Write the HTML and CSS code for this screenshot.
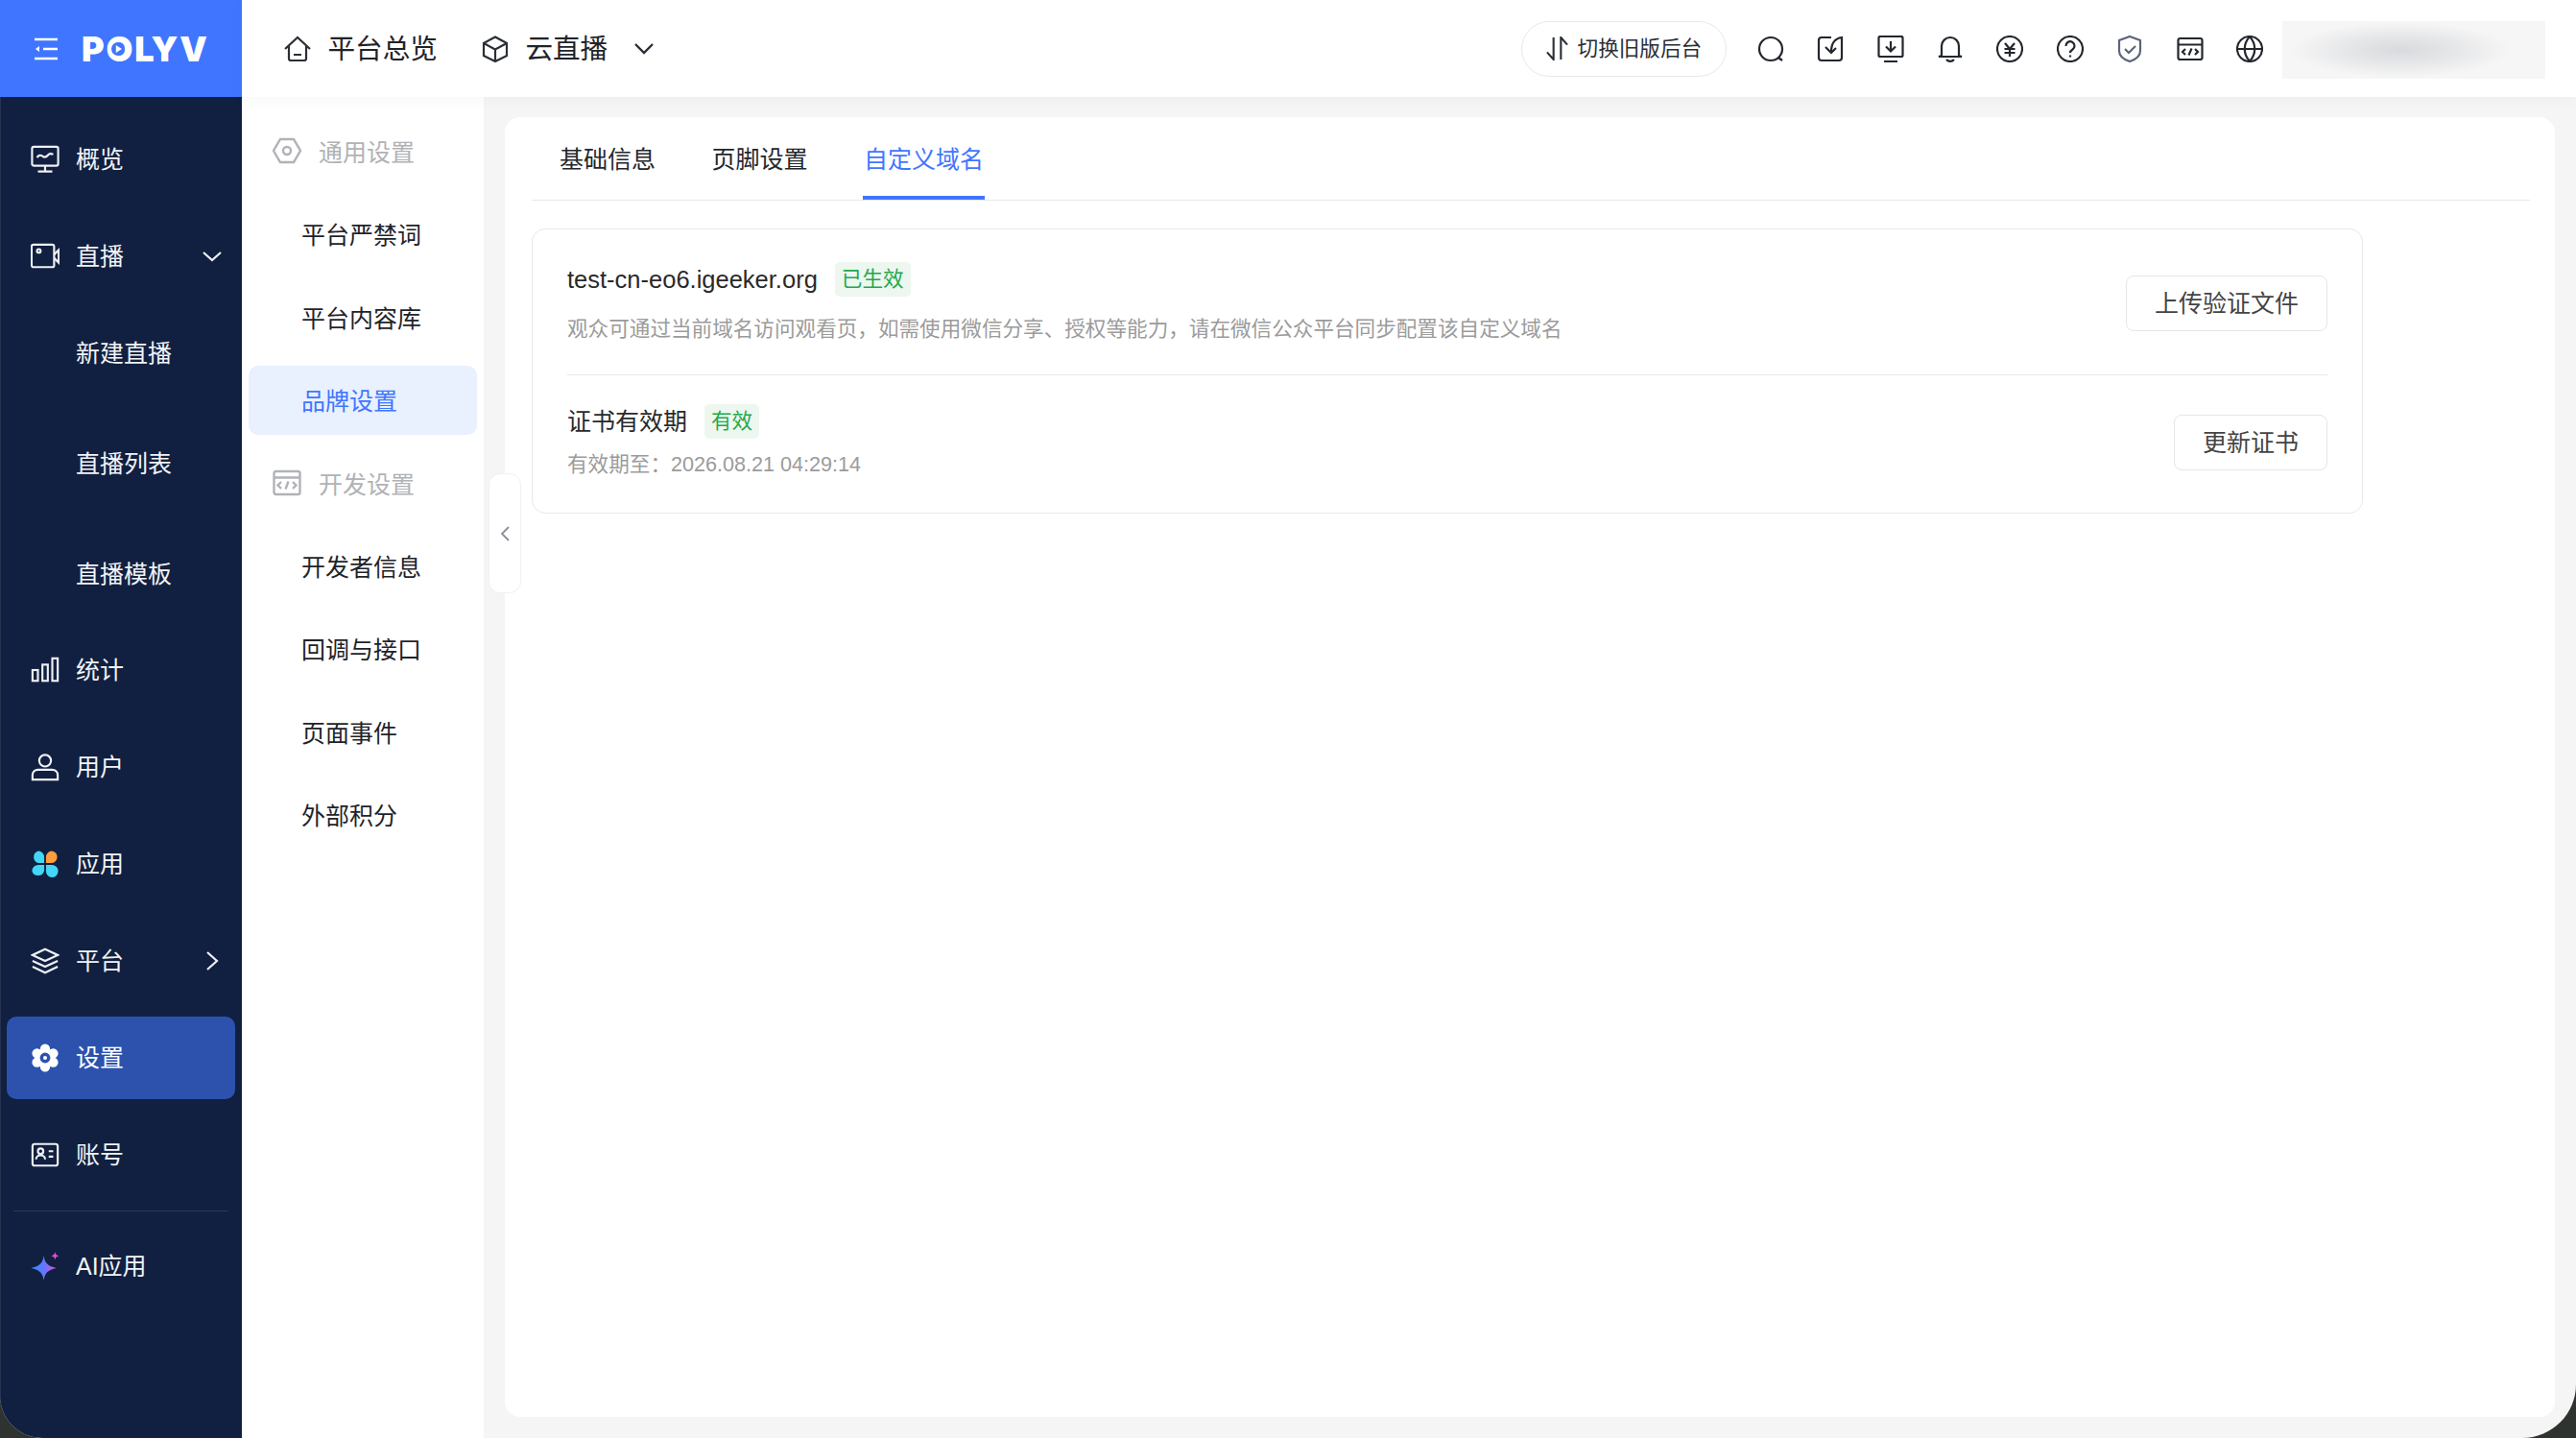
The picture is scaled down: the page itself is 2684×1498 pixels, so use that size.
FILE: index.html
```html
<!DOCTYPE html>
<html lang="zh-CN">
<head>
<meta charset="utf-8">
<title>品牌设置</title>
<link rel="stylesheet" href="styles.css">
</head>
<body>
<div class="app">
  <aside class="side">
    <div class="brand">
      <svg class="brand-menu" viewBox="0 0 26 24"><path d="M1 2h24M10 12h15M1 22h24"/><path class="fillw" d="M2 12l4-3v6z"/></svg>
      <span class="logo">POLYV<svg class="logo-play" viewBox="0 0 16 16"><circle cx="8" cy="8" r="8"/><path d="M5.500 3.500l7 4.500-7 4.500z"/></svg></span>
    </div>
    <nav class="menu">
      <a class="mrow"><svg class="ico" viewBox="0 0 32 32"><rect x="1.500" y="2" width="29" height="21" rx="2"/><path d="M7 14c2-3 4-3 6-1.500s4 1.500 6-1 4-2 6-1M16 23v6M8 29.500h16"/></svg><span>概览</span></a>
      <a class="mrow"><svg class="ico" viewBox="0 0 32 32"><rect x="1" y="3" width="25" height="25" rx="2"/><circle cx="9" cy="10" r="2"/><path d="M26 14l5-5v14l-5-5"/></svg><span>直播</span><svg class="caret" viewBox="0 0 20 20"><path d="M1 6l9 8 9-8"/></svg></a>
      <div class="subs"><a class="sub">新建直播</a><a class="sub">直播列表</a><a class="sub">直播模板</a></div>
      <a class="mrow"><svg class="ico" viewBox="0 0 32 32"><rect x="2" y="16" width="6" height="12"/><rect x="13" y="10" width="6" height="18"/><rect x="24" y="3" width="6" height="25"/></svg><span>统计</span></a>
      <a class="mrow"><svg class="ico" viewBox="0 0 32 32"><circle cx="16" cy="9" r="6.500"/><path d="M2 30v-5c0-4 3-6 6-6h16c3 0 6 2 6 6v5z"/></svg><span>用户</span></a>
      <a class="mrow"><svg class="ico" viewBox="0 0 32 32"><path class="cy" d="M8.500 1.500a7 7 0 0 1 6.500 7v6.500H8.500a7 7 0 0 1 0-13.500zM1.500 24a7 7 0 0 1 7-7H15v6.500a7 7 0 0 1-13.500.5zM17 17h6.500a7 7 0 0 1 0 14A7 7 0 0 1 17 24z"/><path class="or" d="M23.500 1.500a6.800 6.800 0 0 1 0 13.500H17V8.500a7 7 0 0 1 6.500-7z"/></svg><span>应用</span></a>
      <a class="mrow"><svg class="ico" viewBox="0 0 32 32"><path d="M16 3L30 9.500 16 16 2 9.500zM2 16l14 6.500L30 16M2 22.500L16 29l14-6.500"/></svg><span>平台</span><svg class="caret" viewBox="0 0 20 20"><path d="M5 1l10 9-10 9"/></svg></a>
      <a class="mrow on"><svg class="ico" viewBox="0 0 32 32"><g class="gear"><circle cx="16" cy="16" r="11"/><circle cx="16" cy="6" r="5.500"/><circle cx="16" cy="26" r="5.500"/><circle cx="7" cy="11" r="5.500"/><circle cx="25" cy="11" r="5.500"/><circle cx="7" cy="21" r="5.500"/><circle cx="25" cy="21" r="5.500"/></g><circle class="hole" cx="16" cy="16" r="4"/></svg><span>设置</span></a>
      <a class="mrow"><svg class="ico" viewBox="0 0 32 32"><rect x="2" y="4" width="28" height="24" rx="2.500"/><circle cx="11" cy="12" r="3"/><path d="M6 21c0-6 10-6 10 0M20 12h5M20 18h5"/></svg><span>账号</span></a>
      <div class="mline"></div>
      <a class="mrow"><svg class="ico" viewBox="0 0 32 32"><defs><linearGradient id="ai" x1="0" y1="0.5" x2="1" y2="0.5"><stop offset="0" stop-color="#2f8dff"/><stop offset="0.5" stop-color="#5f78ff"/><stop offset="1" stop-color="#e24fd8"/></linearGradient></defs><path fill="url(#ai)" stroke="none" d="M14.500 4c1 8.500 4.500 12 14 14-9.500 2-13 5.500-14 14-1-8.500-4.500-12-14-14 9.500-2 13-5.500 14-14z"/><path class="spark2" d="M27 0c.5 3 1.500 4 4.500 4.500C28.500 5 27.500 6 27 9c-.5-3-1.500-4-4.500-4.500C25.500 4 26.500 3 27 0z"/></svg><span>AI应用</span></a>
    </nav>
  </aside>
  <div class="content">
    <header class="top">
      <a class="tnav"><svg class="tico" viewBox="0 0 28 28"><path d="M1 14L14 2l13 12M5 11v13a2 2 0 0 0 2 2h14a2 2 0 0 0 2-2V11M10 20h8"/></svg><span>平台总览</span></a>
      <a class="tnav cloud"><svg class="tico" viewBox="0 0 28 28"><path d="M14 1.500L26 8v13l-12 6L2 21V8zM2 8l12 6.500L26 8M14 14.500V27"/></svg><span>云直播</span><svg class="tcaret" viewBox="0 0 20 12"><path d="M1 1l9 9 9-9"/></svg></a>
      <div class="spacer"></div>
      <button class="switch"><svg class="sw" viewBox="0 0 24 26"><path d="M8 1v24L1 17M16 25V1l7 8"/></svg>切换旧版后台</button>
      <div class="tools">
        <svg class="tool" viewBox="0 0 28 28"><circle cx="14" cy="14" r="12"/><path d="M22 23l4 3"/></svg>
        <svg class="tool" viewBox="0 0 28 28"><path d="M15 2H5a3 3 0 0 0-3 3v18a3 3 0 0 0 3 3h18a3 3 0 0 0 3-3V2c-7 1-11 6-11 15M9 12l6 6 5-5"/></svg>
        <svg class="tool" viewBox="0 0 28 28"><rect x="1.500" y="1" width="25" height="21" rx="1.500"/><path d="M14 6v10M9 11.500l5 5 5-5M7 27h14"/></svg>
        <svg class="tool" viewBox="0 0 28 28"><path d="M5 21V11a9 9 0 0 1 18 0v10l3 1H2zM10 25c2 2.500 6 2.500 8 0"/></svg>
        <svg class="tool" viewBox="0 0 28 28"><circle cx="14" cy="14" r="13"/><path d="M9 8l5 6 5-6M8.500 14h11M8.500 18h11M14 14v8"/></svg>
        <svg class="tool" viewBox="0 0 28 28"><circle cx="14" cy="14" r="13"/><path d="M9.500 11a4.500 4.500 0 1 1 7 3.500c-1.500 1-2.500 2-2.500 3.500M14 20.500v2"/></svg>
        <svg class="tool shield" viewBox="0 0 28 28"><path d="M14 1l11 4v11c0 5-5 9-11 11C8 25 3 21 3 16V5zM9 14l4 4 7-7"/></svg>
        <svg class="tool" viewBox="0 0 28 28"><rect x="1.500" y="3" width="25" height="22" rx="2"/><path d="M1.500 9.500h25M9 14l-3 3 3 3M19 14l3 3-3 3M15.500 13.500l-3 7"/></svg>
        <svg class="tool" viewBox="0 0 28 28"><circle cx="14" cy="14" r="13"/><path d="M1 14h26M14 1c-7 8-7 18 0 26M14 1c7 8 7 18 0 26"/></svg>
      </div>
      <div class="blurred"></div>
    </header>
    <div class="body">
      <nav class="subnav">
        <div class="group"><svg class="gico" viewBox="0 0 30 28"><path d="M8 2h14l7 12-7 12H8L1 14z"/><circle cx="15" cy="14" r="4"/></svg><span>通用设置</span></div>
        <a class="item">平台严禁词</a>
        <a class="item">平台内容库</a>
        <a class="item active">品牌设置</a>
        <div class="group"><svg class="gico" viewBox="0 0 30 28"><rect x="1.500" y="2" width="27" height="24" rx="2"/><path d="M1.500 8.500h27M9 13l-3.500 3.500L9 20M21 13l3.500 3.500L21 20M16.500 12.500l-3 8"/></svg><span>开发设置</span></div>
        <a class="item">开发者信息</a>
        <a class="item">回调与接口</a>
        <a class="item">页面事件</a>
        <a class="item">外部积分</a>
      </nav>
      <button class="collapse"><svg viewBox="0 0 10 16"><path d="M9 1L2 8l7 7"/></svg></button>
      <main class="main">
        <section class="card">
          <div class="tabs">
            <a class="tab">基础信息</a>
            <a class="tab">页脚设置</a>
            <a class="tab current">自定义域名</a>
          </div>
          <div class="panel">
            <div class="prow one">
              <div class="info">
                <div class="title"><span class="domain">test-cn-eo6.igeeker.org</span><em class="badge">已生效</em></div>
                <p class="desc">观众可通过当前域名访问观看页，如需使用微信分享、授权等能力，请在微信公众平台同步配置该自定义域名</p>
              </div>
              <button class="btn">上传验证文件</button>
            </div>
            <div class="prow two">
              <div class="info">
                <div class="title"><span>证书有效期</span><em class="badge">有效</em></div>
                <p class="desc">有效期至：2026.08.21 04:29:14</p>
              </div>
              <button class="btn">更新证书</button>
            </div>
          </div>
        </section>
      </main>
    </div>
  </div>
</div>
</body>
</html>
```
FILE: styles.css
```css
* { box-sizing: border-box; }
html, body { height: 100%; }
body {
  margin: 0;
  background: #2f3330;
  font-family: "Liberation Sans", "Noto Sans CJK SC", sans-serif;
  color: #1f2329;
  overflow: hidden;
}
a { color: inherit; text-decoration: none; }
button { font-family: inherit; cursor: pointer; }

.app {
  display: flex;
  width: 2684px;
  height: 1498px;
  overflow: hidden;
  border-radius: 0 0 56px 44px;
  background: #f5f5f5;
}

/* left sidebar */
.side {
  flex: 0 0 252px;
  background: #112040;
  border-left: 1px solid #26324e;
  color: #f1f3f6;
}
.brand {
  height: 101px;
  margin-left: -1px;
  background: #4076ff;
  display: flex;
  align-items: center;
  padding-left: 35px;
}
.brand-menu { width: 26px; height: 24px; fill: none; stroke: #fff; stroke-width: 2.5; }
.brand-menu .fillw { fill: #fff; stroke: none; }
.logo {
  position: relative;
  margin-left: 24px;
  font-family: Inter, "Liberation Sans", sans-serif;
  font-weight: 900;
  font-size: 36px;
  line-height: 40px;
  letter-spacing: 1.8px;
  color: #fff;
}
.logo-play {
  position: absolute;
  left: 31px;
  top: 13px;
  width: 14px;
  height: 14px;
  fill: #4076ff;
}
.logo-play path { fill: #fff; }
.menu { padding: 22px 7px 0 6px; display: flex; flex-direction: column; }
.mrow {
  height: 86px;
  margin-bottom: 15px;
  padding-left: 25px;
  display: flex;
  align-items: center;
  gap: 17px;
  font-size: 25px;
  line-height: 34px;
  border-radius: 10px;
  position: relative;
}
.mrow.on { background: #2c52ae; color: #fff; }
.ico { width: 30px; height: 30px; flex: none; fill: none; stroke: #eef0f4; stroke-width: 2.3; }
.ico .cy { fill: #42d6f7; stroke: none; }
.ico .or { fill: #ff9d3d; stroke: none; }
.ico .gear circle { fill: #fff; stroke: none; }
.ico .hole { fill: #fff; stroke: #2c52ae; stroke-width: 3.6; }
.ico .spark2 { fill: #e24fd8; stroke: none; }
.caret {
  width: 20px;
  height: 20px;
  margin-left: auto;
  margin-right: 14px;
  fill: none;
  stroke: #eef0f4;
  stroke-width: 2.2;
}
.subs { margin-top: -15px; }
.sub {
  display: flex;
  align-items: center;
  height: 115px;
  padding: 0 0 3px 72px;
  font-size: 25px;
}
.mline { height: 1px; margin: 0 -1px 14px 7px; width: 224px; background: #2b3852; }

/* right column */
.content { flex: 1; min-width: 0; display: flex; flex-direction: column; }
.top {
  height: 101px;
  flex: none;
  background: #fff;
  display: flex;
  align-items: center;
  padding-left: 44px;
  position: relative;
  z-index: 2;
  box-shadow: 0 2px 14px rgba(0, 0, 0, 0.04);
}
.tnav { display: flex; align-items: center; gap: 17.5px; font-size: 28.6px; line-height: 40px; }
.tnav.cloud { margin-left: 46px; }
.tico { width: 28px; height: 28px; fill: none; stroke: #2b2f36; stroke-width: 2.2; }
.tcaret { width: 20px; height: 12px; margin-left: 10px; fill: none; stroke: #2b2f36; stroke-width: 2.4; }
.spacer { flex: 1; }
.switch {
  width: 214px;
  height: 58px;
  border: 1px solid #e8e8e8;
  border-radius: 29px;
  background: #fff;
  color: #2b2f36;
  font-size: 21.6px;
  line-height: 30px;
  display: flex;
  align-items: center;
  justify-content: center;
  gap: 10px;
  padding: 0;
}
.sw { width: 23px; height: 25px; fill: none; stroke: #2b2f36; stroke-width: 2.2; }
.tools { display: flex; gap: 34.4px; margin-left: 32px; align-items: center; }
.tool { width: 28px; height: 28px; fill: none; stroke: #23272e; stroke-width: 2.2; }
.tool.shield { stroke: #5a6578; }
.blurred {
  width: 274px;
  height: 60px;
  margin: 2px 32px 0 20px;
  background: radial-gradient(ellipse 42% 48% at 45% 50%, #d9dadd 0%, #e6e7e9 50%, #f6f6f6 100%), #f8f8f8;
}

.body { flex: 1; display: flex; min-height: 0; position: relative; }
.subnav {
  flex: 0 0 252px;
  background: #fff;
  padding: 21px 7px 0;
  display: flex;
  flex-direction: column;
  gap: 14.4px;
}
.group {
  height: 72px;
  padding: 0 0 2px 25px;
  display: flex;
  align-items: center;
  gap: 18px;
  font-size: 25px;
  color: #b0b2b6;
}
.gico { width: 30px; height: 28px; fill: none; stroke: #b0b2b6; stroke-width: 2.4; }
.item {
  height: 72px;
  padding: 0 0 2px 55px;
  display: flex;
  align-items: center;
  font-size: 25px;
  border-radius: 10px;
}
.item.active { background: #e9f0fe; color: #4076ff; }
.collapse {
  position: absolute;
  left: 257px;
  top: 392px;
  width: 34px;
  height: 125px;
  padding: 0;
  background: #fff;
  border: 1px solid #f1f1f1;
  border-radius: 12px;
  display: flex;
  align-items: center;
  justify-content: center;
  z-index: 1;
}
.collapse svg { width: 10px; height: 16px; fill: none; stroke: #8b8f96; stroke-width: 1.8; }

.main { flex: 1; min-width: 0; padding: 21px 22px 22px; }
.card {
  height: 100%;
  background: #fff;
  border-radius: 16px;
  padding: 0 26px 0 28px;
}
.tabs {
  height: 87px;
  border-bottom: 1px solid #e8e8e8;
  display: flex;
  padding-left: 28px;
  gap: 56.5px;
}
.tab {
  height: 86px;
  display: flex;
  align-items: center;
  font-size: 25px;
  padding: 0 1px 2px;
  color: #23272e;
}
.tab.current { color: #4076ff; border-bottom: 4px solid #4076ff; padding-top: 2px; padding-bottom: 0; }
.panel {
  width: 1908px;
  height: 297px;
  margin-top: 29px;
  border: 1px solid #e8e8e8;
  border-radius: 14px;
  padding: 0 36px;
}
.prow { display: flex; justify-content: space-between; align-items: flex-start; }
.prow.one { height: 152px; border-bottom: 1px solid #e8e8e8; }
.prow.two { height: 143px; }
.prow.one .info { padding-top: 34px; }
.prow.two .info { padding-top: 30px; }
.prow.one .btn { margin-top: 48px; }
.prow.two .btn { margin-top: 41px; }
.title { display: flex; align-items: center; gap: 18px; font-size: 25px; line-height: 36px; color: #2a2a2a; }
.domain { font-size: 25.5px; }
.badge {
  font-style: normal;
  font-size: 21.6px;
  line-height: 36px;
  height: 36px;
  padding: 0 7px;
  border-radius: 5px;
  background: #edf7f0;
  color: #22a94b;
}
.desc { margin: 0; font-size: 21.6px; line-height: 30px; color: #9b9b9b; }
.one .desc { margin-top: 19px; }
.two .desc { margin-top: 12px; }
.btn {
  height: 58px;
  padding: 0 29px;
  background: #fff;
  border: 1px solid #e6e6e6;
  border-radius: 8px;
  font-size: 25px;
  line-height: 34px;
  color: #444;
}
```
